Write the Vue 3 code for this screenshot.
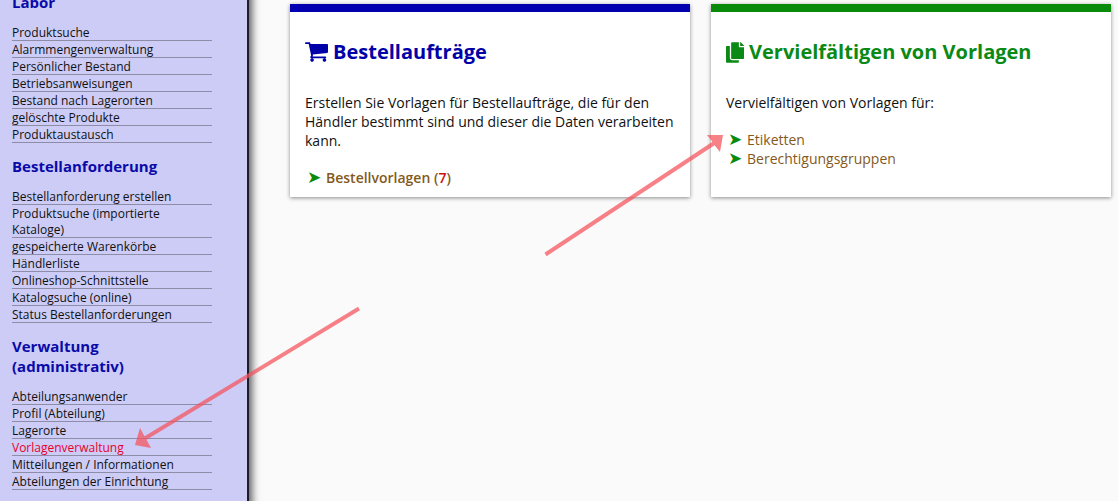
<template>
  <div class="page">
    <!-- Seitenleiste -->
    <aside class="sidebar">
      <section v-for="group in menu" :key="group.title" class="group">
        <h2>{{ group.title }}</h2>
        <ul>
          <li v-for="item in group.items" :key="item" :class="{ active: item === current }">
            <span>{{ item }}</span>
          </li>
        </ul>
      </section>
    </aside>

    <main class="content">
      <article class="card blue">
        <h1>
          <svg class="icon cart" viewBox="64 256 1664 1408"><path d="M704 1536q0 52-38 90t-90 38-90-38-38-90 38-90 90-38 90 38 38 90zm896 0q0 52-38 90t-90 38-90-38-38-90 38-90 90-38 90 38 38 90zm128-1088v512q0 24-16.5 42.5t-40.5 21.5l-1044 122q13 60 13 70 0 16-24 64h920q26 0 45 19t19 45-19 45-45 19h-1024q-26 0-45-19t-19-45q0-11 8-31.5t16-36 21.5-40 15.5-29.5l-177-823h-204q-26 0-45-19t-19-45 19-45 45-19h256q16 0 28.5 6.5t19.5 15.5 13 24.5 8 26 5.5 29.5 4.5 26h1201q26 0 45 19t19 45z"/></svg>
          Bestellaufträge
        </h1>
        <p>Erstellen Sie Vorlagen für Bestellaufträge, die für den Händler bestimmt sind und dieser die Daten verarbeiten kann.</p>
        <ul class="links strong">
          <li><span class="bullet">➤</span>Bestellvorlagen (<span class="count">7</span>)</li>
        </ul>
      </article>

      <article class="card green">
        <h1>
          <svg class="icon copy" viewBox="0 0 448 512"><path d="M320 448v40c0 13.255-10.745 24-24 24H24c-13.255 0-24-10.745-24-24V120c0-13.255 10.745-24 24-24h72v296c0 30.879 25.121 56 56 56h168zm0-344V0H152c-13.255 0-24 10.745-24 24v368c0 13.255 10.745 24 24 24h272c13.255 0 24-10.745 24-24V128H344c-13.2 0-24-10.8-24-24zm120.971-31.029L375.029 7.029A24 24 0 0 0 358.059 0H352v96h96v-6.059a24 24 0 0 0-7.029-16.97z"/></svg>
          Vervielfältigen von Vorlagen
        </h1>
        <p>Vervielfältigen von Vorlagen für:</p>
        <ul class="links">
          <li><span class="bullet">➤</span>Etiketten</li>
          <li><span class="bullet">➤</span>Berechtigungsgruppen</li>
        </ul>
      </article>
    </main>

    <!-- Pfeile liegen über dem Screenshot -->
    <svg class="arrows" viewBox="0 0 1118 501">
      <g class="arrow">
        <path d="M358 306.8 L360 310.2 L146.500 439.700 L151 448 L135 445 L140 428 L144.500 436.300 Z" />
        <path d="M544.400 252.800 L546.600 256.200 L714.600 145.200 L720 152 L723 135 L707 135 L712.400 141.800 Z" />
      </g>
    </svg>
  </div>
</template>

<script setup>
const current = "Vorlagenverwaltung";

const menu = [
  {
    title: "Labor",
    items: [
      "Produktsuche",
      "Alarmmengenverwaltung",
      "Persönlicher Bestand",
      "Betriebsanweisungen",
      "Bestand nach Lagerorten",
      "gelöschte Produkte",
      "Produktaustausch",
    ],
  },
  {
    title: "Bestellanforderung",
    items: [
      "Bestellanforderung erstellen",
      "Produktsuche (importierte Kataloge)",
      "gespeicherte Warenkörbe",
      "Händlerliste",
      "Onlineshop-Schnittstelle",
      "Katalogsuche (online)",
      "Status Bestellanforderungen",
    ],
  },
  {
    title: "Verwaltung (administrativ)",
    items: [
      "Abteilungsanwender",
      "Profil (Abteilung)",
      "Lagerorte",
      "Vorlagenverwaltung",
      "Mitteilungen / Informationen",
      "Abteilungen der Einrichtung",
    ],
  },
];
</script>

<style>
html,
body {
  margin: 0;
  height: 100%;
  overflow: hidden;
  background: #fafafa;
}
</style>

<style scoped>
.page {
  position: relative;
  display: flex;
  width: 1118px;
  height: 501px;
  overflow: hidden;
  background: #fafafa;
  font-family: "Open Sans", "Liberation Sans", sans-serif;
  color: #111;
}

.sidebar {
  flex: 0 0 249px;
  box-sizing: border-box;
  height: 530px;
  margin-top: -21px;
  padding: 0 35px 0 12px;
  background: #ccccf6;
  border-right: 2px solid #1c1c28;
  box-shadow: 3px 0 8px rgba(0, 0, 0, 0.65);
}

.group h2 {
  margin: 0;
  padding: 13px 0 12px;
  font-size: 15px;
  line-height: 20px;
  font-weight: 700;
  color: #0a0aa8;
}

.group ul {
  list-style: none;
  margin: 0;
  padding: 0;
  width: 200px;
}

.group li {
  font-size: 12px;
  line-height: 16px;
  border-bottom: 1px solid #8d8da8;
}

/* Text sitzt 1px tiefer, dicht über der Linie */
.group li span {
  display: block;
  padding-top: 1px;
  margin-bottom: -1px;
}

.group li.active {
  color: #e8002c;
}

.content {
  display: flex;
  align-items: flex-start;
  gap: 21px;
  padding: 4px 0 0 41px;
}

.card {
  width: 400px;
  height: 185px;
  background: #fff;
  border-top: 8px solid;
  box-shadow: 0 1px 4px rgba(0, 0, 0, 0.45);
}

.card.blue {
  border-color: #0000b0;
}

.card.green {
  border-color: #0a8a0a;
}

.card h1 {
  display: flex;
  align-items: center;
  gap: 5px;
  margin: 28px 15px 0;
  font-size: 20px;
  line-height: 24px;
  font-weight: 700;
}

.blue h1 {
  color: #0000a8;
}

.green h1 {
  color: #0a8a14;
}

.icon {
  fill: currentColor;
}

.cart {
  width: 23px;
  height: 20px;
}

.copy {
  width: 18px;
  height: 21px;
}

.card p {
  margin: 29px 15px 0;
  font-size: 14px;
  line-height: 19px;
}

.links {
  list-style: none;
  margin: 18px 0 0 17px;
  padding: 0;
  font-size: 14px;
  line-height: 19px;
  color: #84591c;
}

.links.strong {
  font-weight: 600;
}

.bullet {
  display: inline-block;
  width: 19px;
  line-height: 0;
  font-family: "DejaVu Sans", sans-serif;
  font-size: 17px;
  font-weight: 400;
  color: #0a8a0a;
}

.count {
  color: #d01010;
}

.arrows {
  position: absolute;
  inset: 0;
  width: 1118px;
  height: 501px;
  pointer-events: none;
}

.arrow {
  fill: #f5505a;
  fill-opacity: 0.72;
}
</style>
